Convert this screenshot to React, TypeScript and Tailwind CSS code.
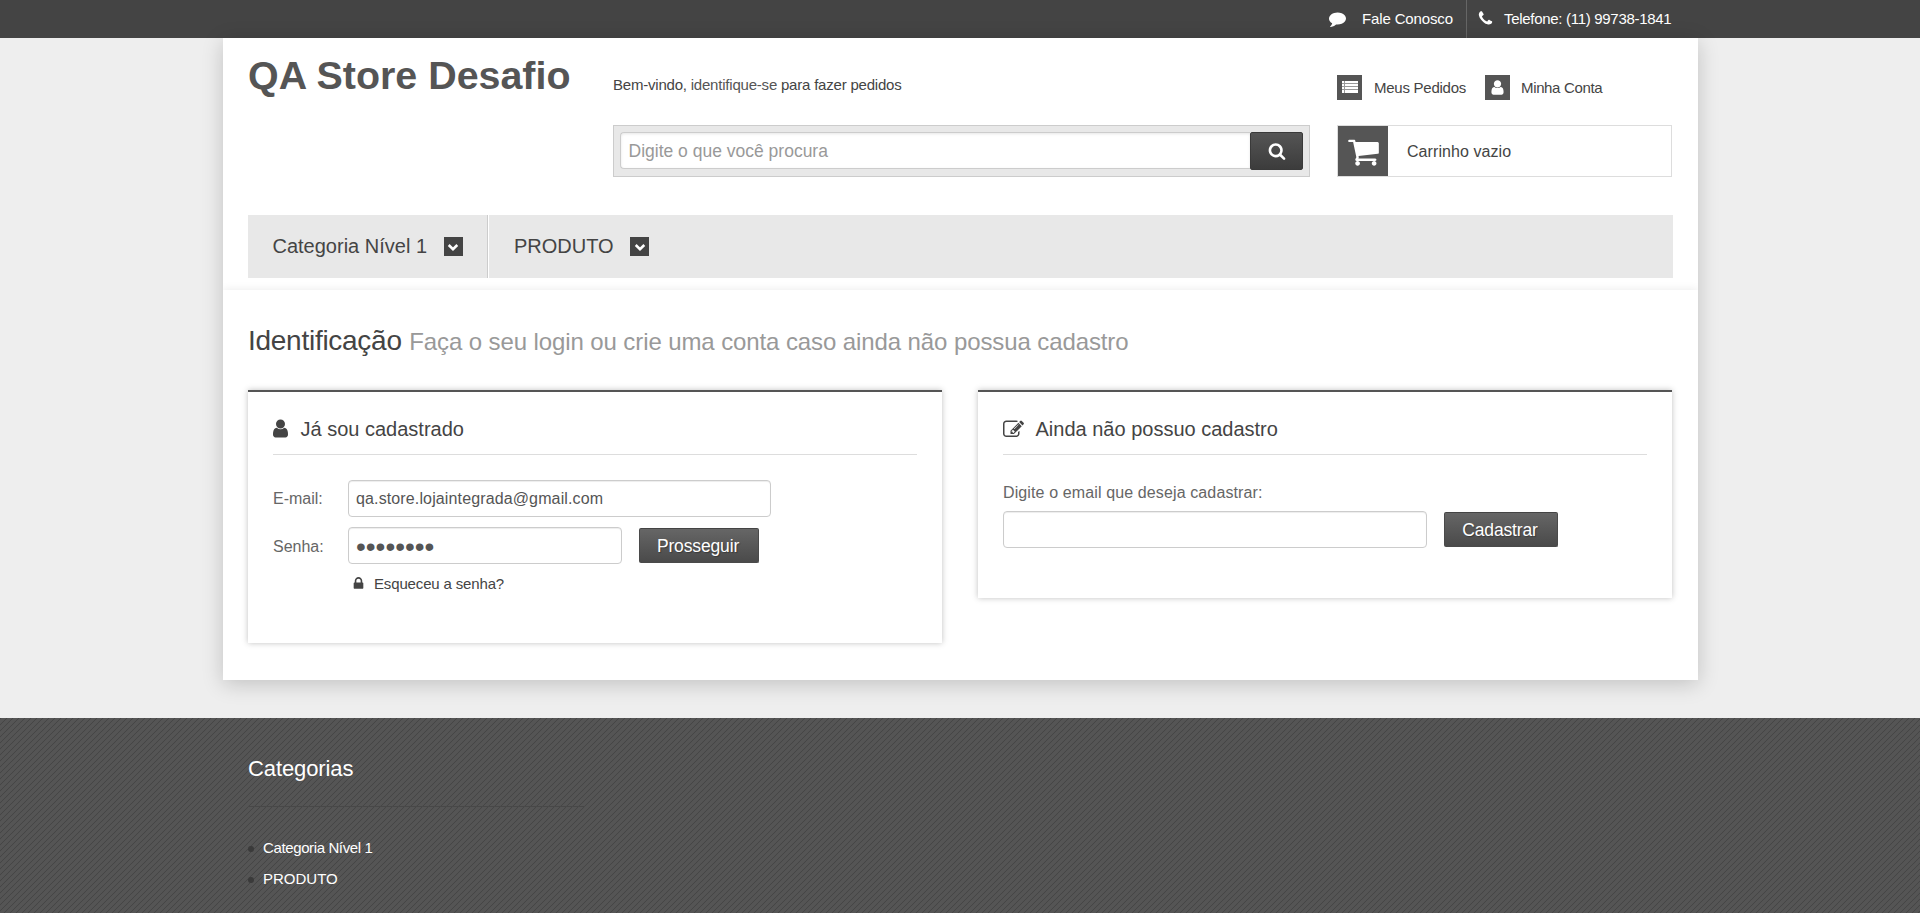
const COMMENT = "M1792 896q0 174-120 321.5t-326 233-450 85.5q-70 0-145-8-198 175-460 242-49 14-114 22-17 2-30.5-9t-17.5-29v-1q-3-4-.5-12t2-10 4.5-9.5l6-9 7-8.5 8-9q7-8 31-34.5t34.5-38 31-39.5 32.5-51 27-59 26-76q-157-89-247.5-220t-90.5-281q0-130 71-248.5t191-204.5 286-136.5 348-50.5q244 0 450 85.5t326 233 120 321.5z";
const PHONE = "M1600 1240q0 27-10 70.5t-21 68.5q-21 50-122 106-94 51-186 51-27 0-53-3.5t-57.5-12.5-47-14.5-55.5-20.5-49-18q-98-35-175-83-127-79-264-216t-216-264q-48-77-83-175-3-9-18-49t-20.5-55.5-14.5-47-12.5-57.5-3.5-53q0-92 51-186 56-101 106-122 25-11 68.5-21t70.5-10q14 0 21 3 18 6 53 76 11 19 30 54t35 63.5 31 53.5q3 4 17.5 25t21.5 35.5 7 28.5q0 20-28.5 50t-62 55-62 53-28.5 46q0 9 5 22.5t8.5 20.5 14 24 11.5 19q76 137 174 235t235 174q2 1 19 11.5t24 14 20.5 8.5 22.5 5q18 0 46-28.5t53-62 55-62 50-28.5q14 0 28.5 7t35.5 21.5 25 17.5q25 15 53.5 31t63.5 35 54 30q70 35 76 53 3 7 3 21z";
const USER = "M1536 1399q0 109-62.5 187t-150.5 78h-854q-88 0-150.5-78t-62.5-187q0-85 8.5-160.5t31.5-152 58.5-131 94-89 134.5-34.5q131 128 313 128t313-128q76 0 134.5 34.5t94 89 58.5 131 31.5 152 8.5 160.5zm-256-887q0 159-112.5 271.5t-271.5 112.5-271.5-112.5-112.5-271.5 112.5-271.5 271.5-112.5 271.5 112.5 112.5 271.5z";
const SEARCH = "M1216 832q0-185-131.5-316.5t-316.5-131.5-316.5 131.5-131.5 316.5 131.5 316.5 316.5 131.5 316.5-131.5 131.5-316.5zm512 832q0 52-38 90t-90 38q-54 0-90-38l-343-342q-179 124-399 124-143 0-273.5-55.5t-225-150-150-225-55.5-273.5 55.5-273.5 150-225 225-150 273.5-55.5 273.5 55.5 225 150 150 225 55.5 273.5q0 220-124 399l343 343q37 37 37 90z";
const CART = "M704 1536q0 52-38 90t-90 38-90-38-38-90 38-90 90-38 90 38 38 90zm896 0q0 52-38 90t-90 38-90-38-38-90 38-90 90-38 90 38 38 90zm128-1088v512q0 24-16.5 42.5t-40.5 21.5l-1044 122q13 60 13 70 0 16-24 64h920q26 0 45 19t19 45-19 45-45 19h-1024q-26 0-45-19t-19-45q0-11 8-31.5t16-36 21.5-40 15.5-29.5l-177-823h-204q-26 0-45-19t-19-45 19-45 45-19h256q16 0 28.5 6.5t19.5 15.5 13 24.5 8 26 5.5 29.5 4.5 26h1201q26 0 45 19t19 45z";
const EDIT = "M888 1184l116-116-152-152-116 116v56h96v96h56zm440-720q-16-16-33 1l-350 350q-17 17-1 33t33-1l350-350q17-17 1-33zm80 594v190q0 119-84.5 203.5t-203.5 84.5h-832q-119 0-203.5-84.5t-84.5-203.5v-832q0-119 84.5-203.5t203.5-84.5h832q63 0 117 25 15 7 18 23 3 17-9 29l-49 49q-14 14-32 8-23-6-45-6h-832q-66 0-113 47t-47 113v832q0 66 47 113t113 47h832q66 0 113-47t47-113v-126q0-13 9-22l64-64q15-15 35-7t20 29zm-96-738l288 288-672 672h-288v-288zm444 132l-92 92-288-288 92-92q28-28 68-28t68 28l152 152q28 28 28 68t-28 68z";
const LOCK = "M640 768h512v-192q0-106-75-181t-181-75-181 75-75 181v192zm832 96v576q0 40-28 68t-68 28h-960q-40 0-68-28t-28-68v-576q0-40 28-68t68-28h32v-192q0-184 132-316t316-132 316 132 132 316v192h32q40 0 68 28t28 68z";

function Icon({ d, className }: { d: string; className: string }) {
  return (
    <svg viewBox="0 0 1792 1792" fill="currentColor" className={"shrink-0 " + className}>
      <path d={d} />
    </svg>
  );
}

function Caret() {
  return (
    <span className="flex size-[19px] shrink-0 items-center justify-center bg-[#444] text-white">
      <svg viewBox="0 0 12 12" className="size-3" fill="none" stroke="currentColor" strokeWidth="2.6">
        <path d="M1.7 4 L6 8.1 L10.3 4" />
      </svg>
    </span>
  );
}

const inputClass =
  "h-[37px] rounded-[4px] border border-[#ccc] bg-white text-[#555] shadow-[inset_0_1px_1px_rgba(0,0,0,0.075)] outline-none";
const buttonClass =
  "h-[35px] rounded-[2px] border border-[#4a4a4a] border-t-[#444] bg-linear-to-b from-[#666] to-[#4a4a4a] pr-0.5 text-center text-[17.5px] leading-[30px] tracking-[-0.15px] text-white [text-shadow:1px_1px_1px_rgba(0,0,0,0.3)]";
const cardClass = "border-t-2 border-[#555] bg-white px-[25px] shadow-[0_0_6px_rgba(0,0,0,0.25)]";

export default function App() {
  return (
    <div className="flex h-[913px] w-[1920px] flex-col overflow-hidden bg-[#eee] font-['Liberation_Sans',Arial,sans-serif] text-[#444]">
      <div className="h-[38px] shrink-0 bg-[#444] text-white">
        <div className="mx-auto flex h-full w-[1424px] justify-end text-[15px] leading-[38px]">
          <div className="flex w-[137px]">
            <Icon d={COMMENT} className="mt-[10px] mr-4 size-[17px]" />
            <span className="tracking-[-0.14px] whitespace-nowrap">Fale Conosco</span>
          </div>
          <div className="flex w-[206px] border-l border-[#666] pl-[10px]">
            <Icon d={PHONE} className="mt-[10px] mr-[10px] size-[17px]" />
            <span className="tracking-[-0.3px] whitespace-nowrap">Telefone: (11) 99738-1841</span>
          </div>
        </div>
      </div>

      <div className="ml-[223px] h-[642px] w-[1475px] shrink-0 bg-white shadow-[0_4px_20px_rgba(0,0,0,0.19)]">
        <header className="h-[252px] overflow-hidden px-[25px]">
          <div className="flex h-[177px]">
            <h1 className="w-[365px] pt-[13px] text-[39.4px] leading-[48px] font-bold whitespace-nowrap text-[#555]">QA Store Desafio</h1>
            <div className="w-[697px]">
              <p className="h-[87px] pt-[36px] text-[15px] leading-[22px] tracking-[-0.21px]">
                Bem-vindo, <span className="text-[#555]">identifique-se</span> para fazer pedidos
              </p>
              <div className="flex h-[52px] border border-[#ccc] bg-[#e8e8e8] p-1.5">
                <div className="h-[37px] flex-1 rounded-l-[4px] border border-r-0 border-[#ccc] bg-white pl-[7.5px] text-[17.5px] leading-[36px] text-[#999] shadow-[inset_0_1px_3px_rgba(0,0,0,0.1)]">Digite o que você procura</div>
                <button className="flex h-[38px] w-[53px] items-center justify-center rounded-[2px] border border-[#3a3a3a] bg-linear-to-b from-[#555] to-[#3c3c3c] text-white">
                  <Icon d={SEARCH} className="size-[18px]" />
                </button>
              </div>
            </div>
            <div className="ml-[27px] w-[335px]">
              <div className="flex h-[87px] pt-[37px] text-[15px] leading-[25px]">
                <span className="flex size-[25px] items-center justify-center bg-[#555] text-white">
                  <svg viewBox="0 0 16 12" className="mb-px ml-px h-3 w-4" shapeRendering="crispEdges">
                    <path d="M0 0h16v12h-16z" fill="#999" />
                    <path d="M0 0h2v2h-2zM3 0h13v2h-13zM0 3h2v2h-2zM3 3h13v2h-13zM0 6h2v2h-2zM3 6h13v2h-13zM0 9h2v3h-2zM3 9h13v3h-13z" fill="#fff" />
                  </svg>
                </span>
                <span className="ml-3 w-[111px] tracking-[-0.25px]">Meus Pedidos</span>
                <span className="flex size-[25px] items-center justify-center bg-[#555] text-white">
                  <Icon d={USER} className="mb-px size-[17px]" />
                </span>
                <span className="ml-[11px] tracking-[-0.35px]">Minha Conta</span>
              </div>
              <div className="flex h-[52px] border border-[#ddd]">
                <span className="flex size-[50px] items-center justify-center bg-[#555] text-white">
                  <Icon d={CART} className="ml-px size-[33px]" />
                </span>
                <span className="ml-[19px] text-[16px] leading-[52px] tracking-[0.07px]">Carrinho vazio</span>
              </div>
            </div>
          </div>
          <nav className="flex h-[63px] w-[1425px] bg-[#e8e8e8] text-[20px] leading-[60px]">
            <div className="flex w-[240px] items-center border-r border-[#ccc] pl-[24.5px]">
              <span className="w-[171px] pb-0.5">Categoria Nível 1</span>
              <Caret />
            </div>
            <div className="flex items-center border-l border-white pl-[25px]">
              <span className="w-[116px] pb-0.5">PRODUTO</span>
              <Caret />
            </div>
          </nav>
          <div className="-mx-[25px] mt-3 h-5 shadow-[0_0_10px_rgba(0,0,0,0.09)]" />
        </header>

        <main className="px-[25px]">
          <h2 className="h-[100px] pt-[31px] text-[28px] leading-10 tracking-[-0.27px] whitespace-nowrap">
            Identificação <small className="text-[24px] tracking-[-0.1px] text-[#999]">Faça o seu login ou crie uma conta caso ainda não possua cadastro</small>
          </h2>
          <div className="flex items-start gap-9">
            <section className={"h-[253px] w-[694px] " + cardClass}>
              <h3 className="flex h-[63px] items-center border-b border-[#ddd] pt-3 text-[20px] whitespace-nowrap">
                <Icon d={USER} className="mr-[10px] mb-px -ml-[3.5px] size-[21px]" />
                Já sou cadastrado
              </h3>
              <div className="mt-[25px] flex text-base">
                <label className="w-[75px] leading-[37px] text-[#666]">E-mail:</label>
                <input className={"w-[423px] px-[7px] tracking-[0.13px] " + inputClass} defaultValue="qa.store.lojaintegrada@gmail.com" />
              </div>
              <div className="mt-[10px] flex text-base">
                <label className="w-[75px] leading-[39px] text-[#666]">Senha:</label>
                <input type="password" className={"w-[274px] px-[7px] pt-0.5 text-[28px] " + inputClass} defaultValue="senha123" />
                <button className={"mt-px ml-[17px] w-[120px] " + buttonClass}>Prosseguir</button>
              </div>
              <a className="mt-2 ml-[78px] flex items-center text-[15px] leading-5 tracking-[-0.15px]">
                <Icon d={LOCK} className="mr-2 mb-px size-[15px]" />
                Esqueceu a senha?
              </a>
            </section>
            <section className={"h-[208px] w-[694px] " + cardClass}>
              <h3 className="flex h-[63px] items-center border-b border-[#ddd] pt-3 text-[20px] whitespace-nowrap">
                <Icon d={EDIT} className="mr-[11.5px] size-[21px]" />
                Ainda não possuo cadastro
              </h3>
              <label className="mt-[26px] block text-base leading-6 tracking-[0.12px] text-[#666]">Digite o email que deseja cadastrar:</label>
              <div className="mt-[6px] flex">
                <input className={"w-[424px] px-[7px] " + inputClass} />
                <button className={"mt-px ml-[17px] w-[114px] " + buttonClass}>Cadastrar</button>
              </div>
            </section>
          </div>
        </main>
      </div>

      <footer className="mt-[38px] flex-1 bg-[#555] bg-[linear-gradient(135deg,#464646_0_0.9px,#555_1.5px_4.2px,#464646_4.6px_5.1px,#555_5.7px)] bg-size-[6px_6px] px-[248px] text-white">
        <h4 className="h-[89px] w-[337px] border-b border-[#484848] pt-[37px] text-[22px] leading-7 tracking-[-0.1px]">Categorias</h4>
        <ul className="pt-[25px] text-[15px] leading-[31px]">
          <li className="flex items-center tracking-[-0.38px]">
            <span className="mt-[3px] mr-[9px] size-1.5 rounded-full bg-[#3a3a3a]" />
            Categoria Nível 1
          </li>
          <li className="flex items-center">
            <span className="mt-[3px] mr-[9px] size-1.5 rounded-full bg-[#3a3a3a]" />
            PRODUTO
          </li>
        </ul>
      </footer>
    </div>
  );
}
